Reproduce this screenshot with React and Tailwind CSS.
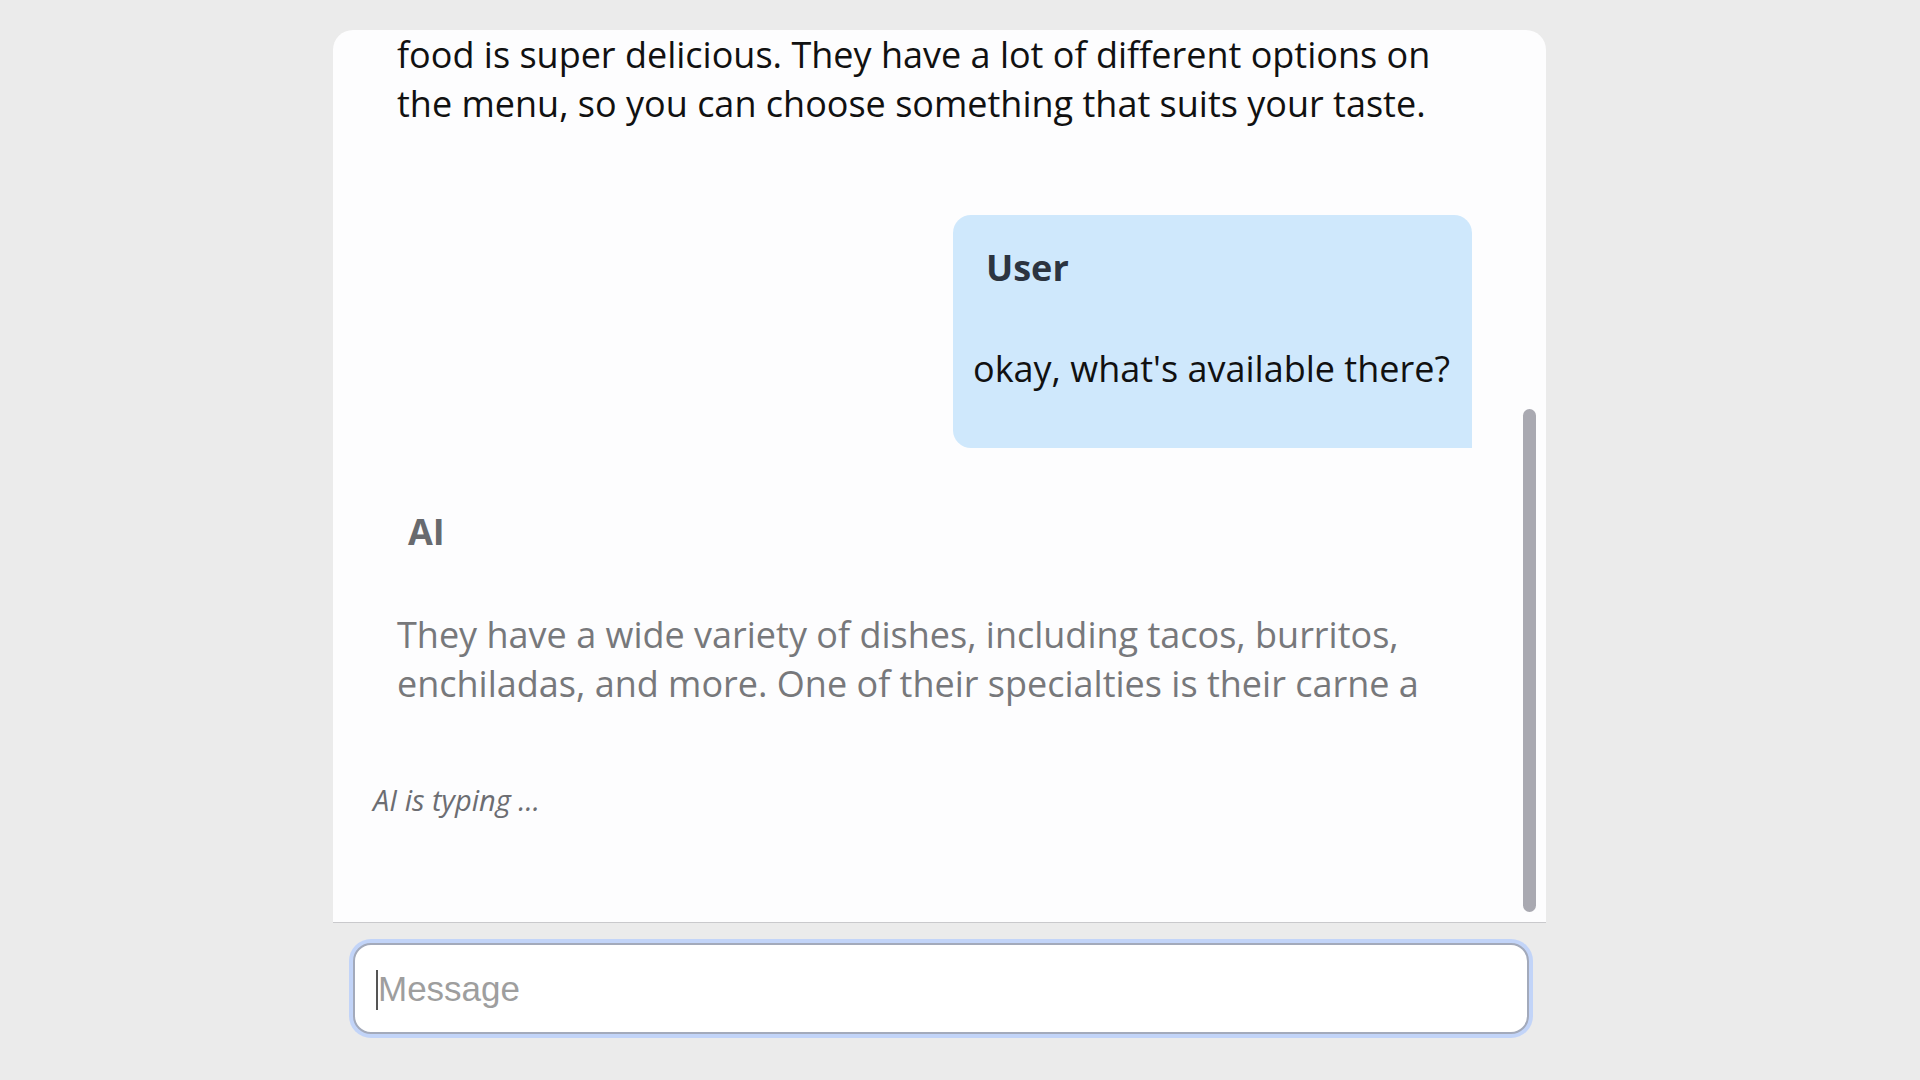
export default function App() {
  const sans = { fontFamily: '"Open Sans", "Noto Sans", sans-serif' };
  return (
    <div className="min-h-screen w-full bg-[#ebebeb] pt-[30px] pl-[333px]" style={sans}>
      <div className="relative w-[1213px] h-[893px] overflow-hidden rounded-t-[20px] bg-[#fdfdfe] border-b border-[#c9c9cc]">
        <div className="pl-[64px] pr-[74px]">
          <p className="text-[36px] leading-[49px] text-[#111111]">
            food is super delicious. They have a lot of different options on
            <br />
            the menu, so you can choose something that suits your taste.
          </p>

          <div className="flex justify-end mt-[87px]">
            <div className="w-[519px] bg-[#cfe8fc] rounded-tl-[18px] rounded-tr-[18px] rounded-bl-[18px] pt-[26px] pb-[55px] pl-[20px] pr-[12px]">
              <div className="pl-[13px] text-[36px] leading-[54px] font-bold text-[#2c3440]">User</div>
              <p className="mt-[49px] text-[36px] leading-[49px] text-[#111111] whitespace-nowrap">okay, what's available there?</p>
            </div>
          </div>

          <div className="mt-[57px] pl-[11px] text-[36px] leading-[54px] font-bold text-[#686a6e]">AI</div>
          <p className="mt-[51px] text-[36px] leading-[49px] text-[#77787b]">
            They have a wide variety of dishes, including tacos, burritos,
            <br />
            enchiladas, and more. One of their specialties is their carne a
          </p>
        </div>
        <div className="mt-[73px] pl-[40px] text-[29px] leading-[38px] italic text-[#6c6d72]">AI is typing ...</div>

        <div className="absolute left-[1190px] top-[379px] w-[13px] h-[503px] rounded-full bg-[#a9a9b1]" />
      </div>

      <div className="mt-[20px] ml-[20px] w-[1176px] h-[91px] rounded-[18px] border-2 border-[#a3aabb] bg-white shadow-[0_0_0_4px_#c2d4f8] flex items-center pl-[21px]">
        <span className="w-[2px] h-[40px] bg-[#555555] mt-[2px]" />
        <span className="text-[35px] text-[#9e9e9e] mt-[2px]" style={{ fontFamily: '"Liberation Sans", Arial, sans-serif' }}>Message</span>
      </div>
    </div>
  );
}
